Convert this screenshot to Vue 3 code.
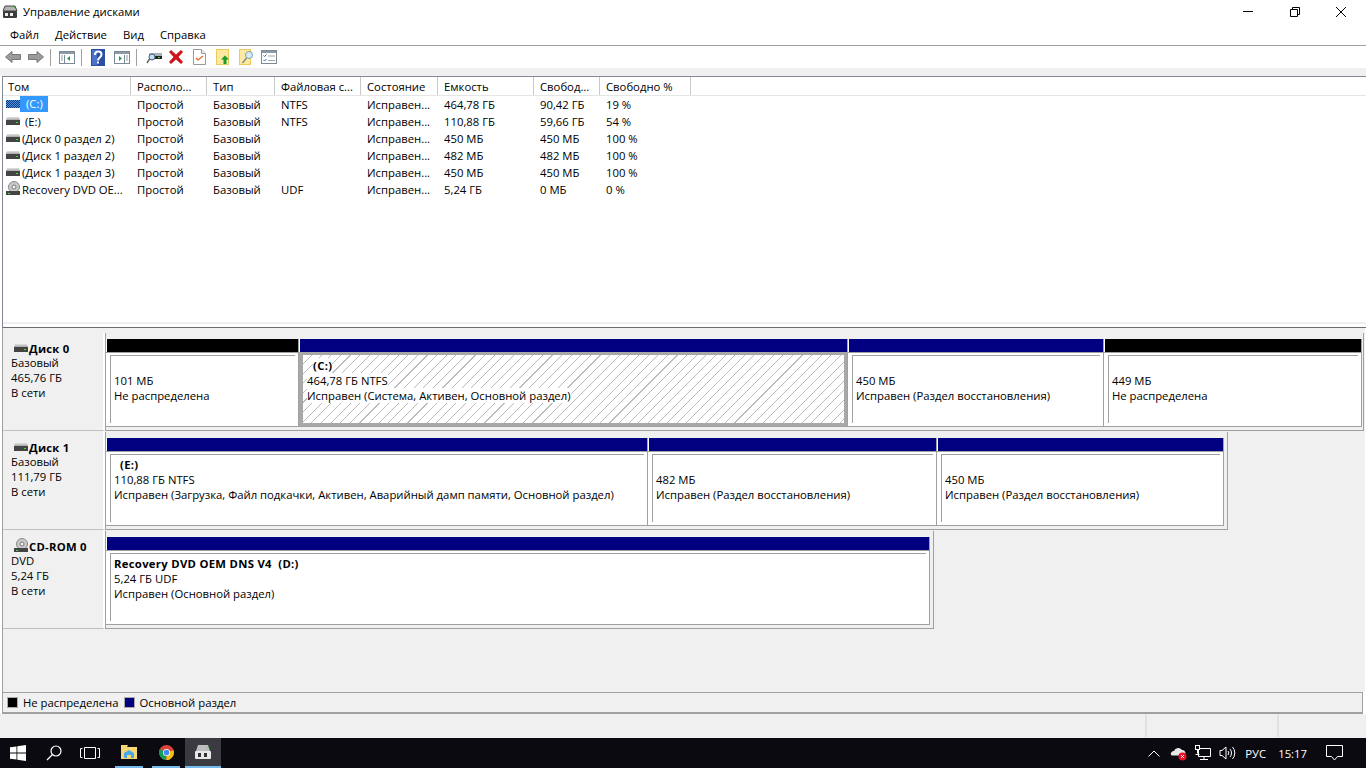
<script setup>
const menus = ['Файл', 'Действие', 'Вид', 'Справка']
const columns = [
  { title: 'Том', width: 128 },
  { title: 'Располо...', width: 76 },
  { title: 'Тип', width: 68 },
  { title: 'Файловая с...', width: 86 },
  { title: 'Состояние', width: 77 },
  { title: 'Емкость', width: 96 },
  { title: 'Свобод...', width: 66 },
  { title: 'Свободно %', width: 91 }
]
const rows = [
  { name: '(C:)', type: 'Простой', base: 'Базовый', fs: 'NTFS', state: 'Исправен...', cap: '464,78 ГБ', free: '90,42 ГБ', pct: '19 %', icon: 'hatch', kind: 'sel' },
  { name: '(E:)', type: 'Простой', base: 'Базовый', fs: 'NTFS', state: 'Исправен...', cap: '110,88 ГБ', free: '59,66 ГБ', pct: '54 %', icon: 'hd', kind: 'pad' },
  { name: '(Диск 0 раздел 2)', type: 'Простой', base: 'Базовый', fs: '', state: 'Исправен...', cap: '450 МБ', free: '450 МБ', pct: '100 %', icon: 'hd', kind: 'plain' },
  { name: '(Диск 1 раздел 2)', type: 'Простой', base: 'Базовый', fs: '', state: 'Исправен...', cap: '482 МБ', free: '482 МБ', pct: '100 %', icon: 'hd', kind: 'plain' },
  { name: '(Диск 1 раздел 3)', type: 'Простой', base: 'Базовый', fs: '', state: 'Исправен...', cap: '450 МБ', free: '450 МБ', pct: '100 %', icon: 'hd', kind: 'plain' },
  { name: 'Recovery DVD OE...', type: 'Простой', base: 'Базовый', fs: 'UDF', state: 'Исправен...', cap: '5,24 ГБ', free: '0 МБ', pct: '0 %', icon: 'cd', kind: 'plain' }
]
const disks = [
  {
    title: 'Диск 0', icon: 'hd', lines: ['Базовый', '465,76 ГБ', 'В сети'], cls: 'full',
    parts: [
      { w: 193, bar: '#000', lines: ['101 МБ', 'Не распределена'] },
      { w: 549, bar: '#000080', head: '(C:)', indent: true, lines: ['464,78 ГБ NTFS', 'Исправен (Система, Активен, Основной раздел)'], selected: true },
      { w: 256, bar: '#000080', lines: ['450 МБ', 'Исправен (Раздел восстановления)'] },
      { w: 258, bar: '#000', lines: ['449 МБ', 'Не распределена'] }
    ]
  },
  {
    title: 'Диск 1', icon: 'hd', lines: ['Базовый', '111,79 ГБ', 'В сети'], cls: '',
    parts: [
      { w: 542, bar: '#000080', head: '(E:)', indent: true, lines: ['110,88 ГБ NTFS', 'Исправен (Загрузка, Файл подкачки, Активен, Аварийный дамп памяти, Основной раздел)'] },
      { w: 289, bar: '#000080', lines: ['482 МБ', 'Исправен (Раздел восстановления)'] },
      { w: 287, bar: '#000080', lines: ['450 МБ', 'Исправен (Раздел восстановления)'] }
    ]
  },
  {
    title: 'CD-ROM 0', icon: 'cd', lines: ['DVD', '5,24 ГБ', 'В сети'], cls: '',
    parts: [
      { w: 824, bar: '#000080', head: 'Recovery DVD OEM DNS V4  (D:)', lines: ['5,24 ГБ UDF', 'Исправен (Основной раздел)'] }
    ]
  }
]
</script>

<template>
  <div class="screen">
    <svg class="defs" aria-hidden="true">
      <defs>
        <linearGradient id="hdg" x1="0" y1="0" x2="0" y2="1">
          <stop offset="0" stop-color="#e2e2e2" />
          <stop offset="1" stop-color="#a6a6a6" />
        </linearGradient>
        <pattern id="chk" width="2" height="2" patternUnits="userSpaceOnUse">
          <rect width="2" height="2" fill="#4d94e0" />
          <rect width="1" height="1" fill="#123a80" />
          <rect x="1" y="1" width="1" height="1" fill="#123a80" />
        </pattern>
        <symbol id="hd" viewBox="0 0 16 16">
          <path d="M2 4h12l1 3H1z" fill="url(#hdg)" />
          <rect x="1" y="7" width="14" height="5" fill="#444" />
          <rect x="11" y="9" width="2" height="1" fill="#3fdc3f" />
        </symbol>
        <symbol id="hatch" viewBox="0 0 16 16">
          <rect x="1" y="4" width="14" height="8" fill="url(#chk)" />
        </symbol>
        <symbol id="cd" viewBox="0 0 16 16">
          <circle cx="9" cy="6" r="5.500" fill="#c9c9c9" stroke="#8b8b8b" />
          <circle cx="9" cy="6" r="2" fill="#f4f4f4" stroke="#777" />
          <path d="M1 10h14v4H1z" fill="#444" />
          <rect x="3" y="12" width="2" height="1" fill="#3fdc3f" />
        </symbol>
      </defs>
    </svg>

    <header class="title">
      <svg class="app-icon" viewBox="0 0 16 16" width="16" height="16">
        <path d="M3 2h10l2 5H1z" fill="#b4b4b4" stroke="#444" />
        <rect x="1" y="7" width="14" height="7" rx="1" fill="#3c3c3c" />
        <rect x="3" y="9" width="3" height="3" fill="#eee" />
        <rect x="8" y="9" width="3" height="3" fill="#eee" />
        <rect x="11" y="3" width="2" height="1" fill="#3fdc3f" />
      </svg>
      <span class="title-text">Управление дисками</span>
      <div class="win-btns">
        <svg width="46" height="22" viewBox="0 0 46 22"><path d="M17 10.500h10" stroke="#000" /></svg>
        <svg width="46" height="22" viewBox="0 0 46 22"><path d="M18.500 8.500h7v7h-7zM20.500 8.500v-2h7v7h-2" fill="none" stroke="#000" /></svg>
        <svg width="46" height="22" viewBox="0 0 46 22"><path d="M18 6l10 10M28 6L18 16" stroke="#000" fill="none" /></svg>
      </div>
    </header>

    <nav class="menu">
      <span v-for="m in menus" :key="m" class="menu-item">{{ m }}</span>
    </nav>

    <div class="toolbar">
      <svg class="tb i-back" width="16" height="16" viewBox="0 0 16 16"><path d="M0.500 8L7 2.500V5.500h8.500v5H7v3z" fill="#9b9b9b" stroke="#777" /></svg>
      <svg class="tb i-fwd" width="16" height="16" viewBox="0 0 16 16"><path d="M15.500 8L9 2.500V5.500H.5v5H9v3z" fill="#9b9b9b" stroke="#777" /></svg>
      <i class="sep s1"></i>
      <svg class="tb i-a" width="16" height="16" viewBox="0 0 16 16"><rect x=".5" y="2.500" width="15" height="12" fill="#fff" stroke="#7a8a96" /><rect x="1" y="3" width="14" height="2" fill="#8b9aa5" /><path d="M5.500 6v8" stroke="#7a8a96" /><path d="M2 7h2M2 9h2M2 11h2" stroke="#8b9aa5" /><path d="M11 7v5l-3-2.500z" fill="#2a9a4a" /></svg>
      <i class="sep s2"></i>
      <svg class="tb i-help" width="14" height="17" viewBox="0 0 14 17"><rect width="14" height="17" fill="#2b4fa3" /><rect x="1" y="1" width="5" height="15" fill="#4a72c9" /><path d="M4 6c0-5 6.500-4.500 6.500-.5 0 3-3.500 3-3.500 6" stroke="#fff" stroke-width="2" fill="none" /><rect x="6" y="12.500" width="2" height="2" fill="#fff" /></svg>
      <svg class="tb i-b" width="16" height="16" viewBox="0 0 16 16"><rect x=".5" y="2.500" width="15" height="12" fill="#fff" stroke="#7a8a96" /><rect x="1" y="3" width="14" height="2" fill="#8b9aa5" /><path d="M10.500 6v8" stroke="#7a8a96" /><path d="M12 7h2M12 9h2M12 11h2" stroke="#8b9aa5" /><path d="M5 7v5l3-2.500z" fill="#2a9a4a" /></svg>
      <i class="sep s3"></i>
      <svg class="tb i-conn" width="16" height="16" viewBox="0 0 16 16"><path d="M3 4h13v6H3z" fill="#a9b4b9" /><rect x="6" y="7" width="10" height="3" fill="#222" /><rect x="12" y="8" width="2" height="1" fill="#3fdc3f" /><circle cx="6" cy="8" r="3" fill="#bfe3f5" stroke="#557" /><path d="M3.500 10L1 14" stroke="#666" stroke-width="1.500" /></svg>
      <svg class="tb i-x" width="16" height="16" viewBox="0 0 16 16"><path d="M3 1l5 4.500L13 1l2 2-4.500 5 4.500 5-2 2-5-4.500L3 15l-2-2 4.500-5L1 3z" fill="#d0121b" /></svg>
      <svg class="tb i-doc" width="13" height="16" viewBox="0 0 13 16"><path d="M.5.500h8l4 4v11H.5z" fill="#fff" stroke="#9a9a9a" /><path d="M8.500.500v4h4" fill="#eee" stroke="#9a9a9a" /><path d="M3 9l2 2 5-4" fill="none" stroke="#e5622b" stroke-width="1.300" /></svg>
      <svg class="tb i-up" width="14" height="16" viewBox="0 0 14 16"><rect x=".5" y=".5" width="12" height="15" fill="#fdeaa0" stroke="#eec95d" /><path d="M9 6.500l4 4h-2.500V15h-3v-4.500H5z" fill="#1d9a2a" /></svg>
      <svg class="tb i-find" width="15" height="16" viewBox="0 0 15 16"><rect x=".5" y=".5" width="11" height="15" fill="#fdeaa0" stroke="#eec95d" /><circle cx="10" cy="6" r="3.500" fill="#d8ecf7" stroke="#7f9fb5" /><path d="M7.500 9l-4 5" stroke="#8a8a8a" stroke-width="1.500" /></svg>
      <svg class="tb i-props" width="16" height="14" viewBox="0 0 16 14"><rect x=".5" y=".5" width="15" height="13" fill="#fff" stroke="#7a8a96" /><rect x="1" y="1" width="14" height="2" fill="#8b9aa5" /><path d="M2.500 5.500l1 1 2-2M2.500 10l1 1 2-2" stroke="#2364c5" fill="none" /><path d="M7 6h7M7 10.500h7" stroke="#9aa7ad" /></svg>
    </div>

    <div class="strip"></div>

    <section class="list">
      <div class="thead">
        <div v-for="c in columns" :key="c.title" class="th" :style="{ width: c.width + 'px' }">{{ c.title }}</div>
      </div>
      <div class="tbody">
        <div v-for="r in rows" :key="r.name" class="tr">
          <div class="td first" :style="{ width: columns[0].width + 'px' }">
            <svg width="16" height="16" class="row-icon"><use :href="'#' + r.icon" /></svg>
            <span :class="r.kind">{{ r.name }}</span>
          </div>
          <div class="td" :style="{ width: columns[1].width + 'px' }">{{ r.type }}</div>
          <div class="td" :style="{ width: columns[2].width + 'px' }">{{ r.base }}</div>
          <div class="td" :style="{ width: columns[3].width + 'px' }">{{ r.fs }}</div>
          <div class="td" :style="{ width: columns[4].width + 'px' }">{{ r.state }}</div>
          <div class="td" :style="{ width: columns[5].width + 'px' }">{{ r.cap }}</div>
          <div class="td" :style="{ width: columns[6].width + 'px' }">{{ r.free }}</div>
          <div class="td" :style="{ width: columns[7].width + 'px' }">{{ r.pct }}</div>
        </div>
      </div>
      <div class="split"></div>
    </section>

    <section class="area">
      <div v-for="d in disks" :key="d.title" class="disk">
        <div class="label">
          <div class="label-title">
            <svg width="16" height="16"><use :href="'#' + d.icon" /></svg>
            <b>{{ d.title }}</b>
          </div>
          <div v-for="l in d.lines" :key="l" class="line">{{ l }}</div>
        </div>
        <div class="parts" :class="d.cls">
          <div v-for="p in d.parts" :key="p.lines[0] + p.w" class="part" :style="{ width: p.w + 'px' }">
            <div class="bar" :style="{ background: p.bar }"></div>
            <div class="cell" :class="{ selected: p.selected }">
              <div class="inner">
                <div class="txt head" :class="{ indent: p.indent }"><span v-if="p.head">{{ p.head }}</span></div>
                <div v-for="l in p.lines" :key="l" class="txt"><span>{{ l }}</span></div>
              </div>
            </div>
          </div>
        </div>
      </div>
    </section>

    <footer class="legend">
      <i class="swatch black"></i><span>Не распределена</span>
      <i class="swatch navy"></i><span>Основной раздел</span>
    </footer>

    <div class="status">
      <div class="st st1"></div>
      <div class="st st2"></div>
      <div class="st st3"></div>
    </div>

    <div class="taskbar">
      <svg class="t-win" width="16" height="16" viewBox="0 0 16 16"><path d="M0 2.300l6.500-.9v6.200H0zM7.300 1.300L16 0v7.600H7.300zM0 8.400h6.500v6.200L0 13.700zM7.300 8.400H16V16l-8.700-1.300z" fill="#fff" /></svg>
      <svg class="t-search" width="16" height="16" viewBox="0 0 16 16"><circle cx="10" cy="6" r="5" fill="none" stroke="#fff" stroke-width="1.200" /><path d="M6.500 9.500L1 15" stroke="#fff" stroke-width="1.200" /></svg>
      <svg class="t-view" width="20" height="14" viewBox="0 0 20 14"><path d="M4.500 1.500h11v11h-11zM2.500 2.500H.5v9h2M17.500 2.500h2v9h-2" fill="none" stroke="#fff" /></svg>
      <div class="task t-exp">
        <svg width="16" height="14" viewBox="0 0 16 14"><path d="M0 2h6l1-2H0zM0 2h16v12H0z" fill="#f7d774" /><path d="M3 13V8l5-3 5 3v5H10v-3H6v3z" fill="#4aa8e8" /></svg>
      </div>
      <div class="task t-chrome">
        <svg width="15" height="15" viewBox="0 0 16 16"><circle cx="8" cy="8" r="8" fill="#db4437" /><path d="M8 8L1 4.500A8 8 0 0 0 8 16z" fill="#0f9d58" /><path d="M8 8l7.500-2.500A8 8 0 0 1 8 16z" fill="#f4c20d" /><circle cx="8" cy="8" r="3.800" fill="#fff" /><circle cx="8" cy="8" r="3" fill="#4285f4" /></svg>
      </div>
      <div class="task t-disk">
        <svg width="18" height="16" viewBox="0 0 18 16"><path d="M4 1h10l2 6H2z" fill="#bdbdbd" /><rect x="13" y="3" width="2" height="1" fill="#45e045" /><rect x="1" y="7" width="16" height="8" rx="1" fill="#e8e8e8" /><rect x="4" y="9" width="3" height="4" fill="#333" /><rect x="10" y="9" width="3" height="4" fill="#333" /></svg>
      </div>
      <div class="tray">
        <svg class="tr-up" width="12" height="7" viewBox="0 0 12 7"><path d="M.5 6.500L6 1l5.500 5.500" fill="none" stroke="#fff" /></svg>
        <svg class="tr-cloud" width="17" height="16" viewBox="0 0 17 16"><path d="M1 10a3 3 0 0 1 3-4 4.500 4.500 0 0 1 8-1 3 3 0 0 1 2 5.500H2z" fill="#e8e8e8" /><circle cx="12.500" cy="11.500" r="4" fill="#e81123" /><path d="M11 10l3 3M14 10l-3 3" stroke="#fff" /></svg>
        <svg class="tr-net" width="16" height="16" viewBox="0 0 16 16"><path d="M3.500 3.500h12v8h-12zM9 11.500v3M5 14.500h8" fill="none" stroke="#fff" /><rect x=".5" y=".5" width="4" height="4" fill="#0a0a10" stroke="#fff" /><path d="M2.500 4.500v4M.5 9.500h4" stroke="#fff" /></svg>
        <svg class="tr-vol" width="17" height="14" viewBox="0 0 17 14"><path d="M1 4.500h2L7 1v12L3 9.500H1z" fill="none" stroke="#fff" /><path d="M9 5a3 3 0 0 1 0 4M11 3a6 6 0 0 1 0 8M13.500 1a9 9 0 0 1 0 12" fill="none" stroke="#fff" /></svg>
        <span class="tr-lang">РУС</span>
        <span class="tr-time">15:17</span>
        <svg class="tr-note" width="17" height="16" viewBox="0 0 17 16"><path d="M.5.500h16v11h-5L8.500 15l-3-3.500h-5z" fill="none" stroke="#fff" /></svg>
      </div>
    </div>
  </div>
</template>

<style scoped>
.screen {
  width: 1366px;
  height: 768px;
  display: flex;
  flex-direction: column;
  overflow: hidden;
  background: #fff;
  color: #000;
  font-family: "Open Sans", "Noto Sans", sans-serif;
  font-size: 11.3px;
}
.defs { display: block; width: 0; height: 0; }
.title { height: 23px; display: flex; align-items: center; padding-left: 2px; flex: none; }
.app-icon { margin-right: 5px; }
.win-btns { margin-left: auto; display: flex; padding-right: 2px; }
.menu { height: 23px; flex: none; box-sizing: border-box; display: flex; padding-left: 3px; align-items: center; border-bottom: 1px solid #a0a0a0; }
.menu-item { padding: 0 7px; margin-right: 2px; }
.toolbar { height: 22px; flex: none; display: flex; align-items: center; }
.tb { flex: none; }
.i-back { margin-left: 5px; }
.i-fwd { margin-left: 7px; }
.sep { width: 1px; height: 17px; background: #a0a0a0; flex: none; }
.s1 { margin-left: 6px; }
.i-a { margin-left: 8px; }
.s2 { margin-left: 6px; }
.i-help { margin-left: 9px; }
.i-b { margin-left: 9px; }
.s3 { margin-left: 6px; }
.i-conn { margin-left: 9px; }
.i-x { margin-left: 6px; }
.i-doc { margin-left: 9px; }
.i-up { margin-left: 10px; }
.i-find { margin-left: 9px; }
.i-props { margin-left: 7px; }
.strip { height: 8px; background: #f0f0f0; flex: none; }
.list { height: 252px; flex: none; box-sizing: border-box; margin-left: 2px; border: 1px solid #828790; border-right: none; border-bottom: none; display: flex; flex-direction: column; }
.thead { display: flex; height: 19px; flex: none; box-sizing: border-box; border-bottom: 1px solid #e5e5e5; }
.th { box-sizing: border-box; border-right: 1px solid #c8c8c8; padding-left: 6px; line-height: 19px; flex: none; white-space: nowrap; }
.th:first-child { padding-left: 5px; }
.tbody { flex: 1; }
.tr { display: flex; height: 17px; line-height: 17px; }
.td { box-sizing: border-box; padding-left: 6px; flex: none; white-space: nowrap; overflow: hidden; }
.td.first { padding-left: 2px; display: flex; align-items: flex-start; }
.row-icon { flex: none; margin-right: 2px; }
.sel { background: #3399ff; color: #fff; padding: 0 5px 0 6px; margin-left: -3px; height: 16px; line-height: 16px; }
.pad { padding-left: 2px; }
.plain { margin-left: -1px; }
.split { height: 7px; flex: none; background: linear-gradient(#fff 0 1px, #f0f0f0 1px 3px, #fff 3px 6px, #6d6d6d 6px 7px); }
.area { height: 364px; flex: none; box-sizing: border-box; margin-left: 2px; margin-right: 1px; border-left: 1px solid #a0a0a0; padding-top: 5px; background: #f0f0f0; }
.disk { display: flex; align-items: flex-start; height: 98px; margin-bottom: 1px; }
.label { width: 102px; height: 98px; flex: none; box-sizing: border-box; padding: 8px 0 0 8px; border-right: 2px solid #fff; border-bottom: 1px solid #c0c0c0; line-height: 15px; }
.label-title { display: flex; align-items: center; height: 14px; margin-left: 2px; }
.label-title svg { flex: none; }
.label-title b { letter-spacing: .25px; }
.parts { display: flex; flex: none; height: 98px; box-sizing: border-box; padding: 6px 3px 3px 0; border-left: 1px solid #a0a0a0; border-right: 1px solid #a0a0a0; border-bottom: 1px solid #a0a0a0; background: #f0f0f0; }
.parts.full { padding-right: 1px; }
.part { flex: none; box-sizing: border-box; display: flex; flex-direction: column; border-right: 1px solid #a0a0a0; border-bottom: 1px solid #a0a0a0; background: #fff; }
.bar { height: 13px; flex: none; margin-left: 1px; }
.cell { flex: 1; min-height: 0; background: #fff; box-sizing: border-box; border-top: 1px solid #a0a0a0; padding: 2px 3px 3px 4px; }
.inner { height: 100%; box-sizing: border-box; border-left: 1px solid #a0a0a0; border-top: 1px solid #a0a0a0; padding: 2px 0 0 3px; line-height: 15px; white-space: nowrap; overflow: hidden; }
.cell.selected { padding: 0; border: solid #a8a8a8; border-width: 3px 3px 3px 4px; }
.cell.selected .inner { border: none; padding: 3px 0 0 4px; background: repeating-linear-gradient(135deg, #fff 0 6px, #bcbcbc 6px 6.8px); }
.cell.selected .txt span { background: #fff; }
.txt.head { height: 15px; font-weight: 700; letter-spacing: .3px; white-space: pre; }
.txt.indent { padding-left: 6px; }
.legend { height: 22px; flex: none; box-sizing: border-box; margin-left: 2px; margin-right: 3px; border: 1px solid #a0a0a0; border-width: 1px 1px 2px; display: flex; align-items: center; padding-left: 4px; background: #f0f0f0; }
.swatch { width: 11px; height: 11px; box-sizing: border-box; border: 1px solid #aaa; flex: none; margin-right: 5px; }
.black { background: #000; }
.navy { background: #000080; margin-left: 5px; }
.status { height: 24px; flex: none; display: flex; background: #f0f0f0; }
.st { height: 23px; box-sizing: border-box; border-right: 2px solid #e2e2e2; }
.st1 { width: 1147px; }
.st2 { width: 132px; }
.st3 { flex: 1; border: none; }
.taskbar { height: 30px; flex: none; background: #0a0a10; display: flex; align-items: center; color: #fff; }
.t-win { margin-left: 10px; }
.t-search { margin-left: 20px; }
.t-view { margin-left: 18px; }
.task { height: 30px; width: 28px; box-sizing: border-box; border-bottom: 2px solid #76b9ed; display: flex; align-items: center; justify-content: center; flex: none; }
.t-exp { margin-left: 15px; }
.t-chrome { margin-left: 9px; }
.t-disk { margin-left: 5px; width: 36px; background: #3a3a40; }
.tray { margin-left: auto; display: flex; align-items: center; padding-right: 23px; }
.tr-cloud { margin-left: 10px; }
.tr-net { margin-left: 8px; }
.tr-vol { margin-left: 8px; }
.tr-lang { margin-left: 9px; width: 22px; }
.tr-time { margin-left: 11px; }
.tr-note { margin-left: 19px; }
</style>

<style>
html, body { margin: 0; background: #fff; }
</style>
